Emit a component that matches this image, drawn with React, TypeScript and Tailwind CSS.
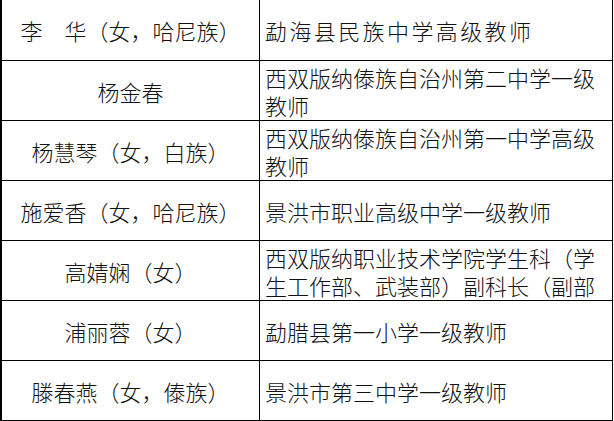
import React from "react";

const rows: { name: string; job: string; tight?: boolean }[] = [
  { name: "李　华（女，哈尼族）", job: "勐海县民族中学高级教师", tight: true },
  { name: "杨金春", job: "西双版纳傣族自治州第二中学一级教师" },
  { name: "杨慧琴（女，白族）", job: "西双版纳傣族自治州第一中学高级教师" },
  { name: "施爱香（女，哈尼族）", job: "景洪市职业高级中学一级教师" },
  { name: "高婧娴（女）", job: "西双版纳职业技术学院学生科（学生工作部、武装部）副科长（副部" },
  { name: "浦丽蓉（女）", job: "勐腊县第一小学一级教师" },
  { name: "滕春燕（女，傣族）", job: "景洪市第三中学一级教师" },
];

export default function App() {
  return (
    <div
      className="w-[614px] h-[421px] bg-white overflow-hidden text-[#111] text-[22px]"
      style={{ fontFamily: '"Noto Sans CJK SC", "Noto Sans", sans-serif' }}
    >
      <div className="w-[613px] border-l-2 border-r border-black box-border">
        {rows.map((r, i) => (
          <div
            key={i}
            className={`flex border-b border-black box-border ${i === 0 ? "h-[61px]" : "h-[60px]"}`}
          >
            <div className="w-[258px] shrink-0 border-r border-black box-border flex items-center justify-center leading-[28px] font-light">
              {r.name}
            </div>
            <div
              className={`flex-1 flex items-center pl-[5px] pr-[6px] leading-[28px] font-light overflow-hidden ${
                r.tight ? "tracking-[2.4px]" : ""
              }`}
            >
              <span>{r.job}</span>
            </div>
          </div>
        ))}
      </div>
    </div>
  );
}
